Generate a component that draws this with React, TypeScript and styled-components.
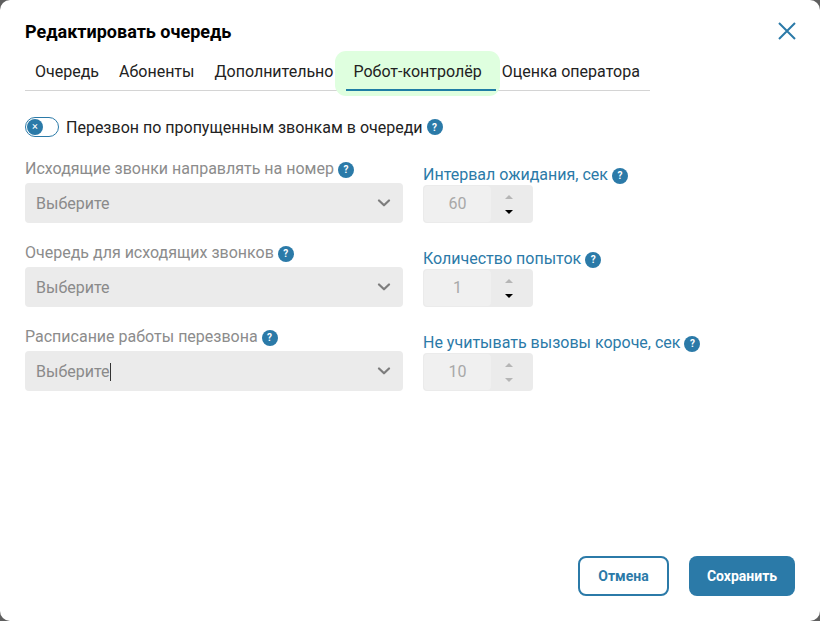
import React from 'react';
import styled, { createGlobalStyle } from 'styled-components';

const Global = createGlobalStyle`
  html, body {
    margin: 0;
    padding: 0;
    height: 100%;
    background: #5f5f5f;
    font-family: Roboto, "Liberation Sans", sans-serif;
  }
  * { box-sizing: border-box; }
`;

const Help = () => (
  <HelpIcon>?</HelpIcon>
);

const Chevron = () => (
  <svg width="14" height="8" viewBox="0 0 14 8" fill="none">
    <path d="M2 1.5L7 6.3l5-4.8" stroke="#7d7d7d" strokeWidth="2.2" strokeLinecap="round" strokeLinejoin="round" />
  </svg>
);

const fields = [
  { select: 'Исходящие звонки направлять на номер', spin: 'Интервал ожидания, сек', value: '60', down: true },
  { select: 'Очередь для исходящих звонков', spin: 'Количество попыток', value: '1', down: true },
  { select: 'Расписание работы перезвона', spin: 'Не учитывать вызовы короче, сек', value: '10', down: false, caret: true },
];

export default function App() {
  return (
    <Modal>
      <Global />
      <Header>
        <Title>Редактировать очередь</Title>
        <Close>
          <svg width="20" height="20" viewBox="0 0 20 20" fill="none">
            <path d="M2 2l16 16M18 2L2 18" stroke="#2b7aa8" strokeWidth="2" />
          </svg>
        </Close>
      </Header>
      <Tabs>
        <Tab>Очередь</Tab>
        <Tab>Абоненты</Tab>
        <Tab>Дополнительно</Tab>
        <Tab $active>Робот-контролёр</Tab>
        <Tab>Оценка оператора</Tab>
      </Tabs>
      <ToggleRow>
        <Toggle>
          <Knob>×</Knob>
        </Toggle>
        <ToggleLabel>Перезвон по пропущенным звонкам в очереди</ToggleLabel>
        <Help />
      </ToggleRow>
      <Form>
        {fields.map((f) => (
          <Row key={f.select}>
            <SelectField>
              <SelectLabel>
                {f.select} <Help />
              </SelectLabel>
              <Select>
                <span>
                  Выберите
                  {f.caret && <Caret />}
                </span>
                <Chevron />
              </Select>
            </SelectField>
            <SpinField>
              <SpinLabel>
                {f.spin} <Help />
              </SpinLabel>
              <Spin>
                <SpinValue>{f.value}</SpinValue>
                <SpinButtons>
                  <ArrowUp />
                  <ArrowDown $dark={f.down} />
                </SpinButtons>
              </Spin>
            </SpinField>
          </Row>
        ))}
      </Form>
      <Footer>
        <CancelButton>Отмена</CancelButton>
        <SaveButton>Сохранить</SaveButton>
      </Footer>
    </Modal>
  );
}

const Modal = styled.div`
  width: 820px;
  height: 621px;
  background: #fff;
  border-radius: 10px;
  padding: 0 25px;
  display: flex;
  flex-direction: column;
  overflow: hidden;
`;

const Header = styled.div`
  display: flex;
  justify-content: space-between;
  align-items: center;
  height: 62px;
`;

const Title = styled.h2`
  margin: 0;
  font-size: 18px;
  font-weight: 700;
  color: #000;
`;

const Close = styled.div`
  display: flex;
  margin-right: -2px;
`;

const Tabs = styled.div`
  display: flex;
  width: 625px;
  height: 29px;
  border-bottom: 1px solid #d4d4d4;
  isolation: isolate;
`;

const Tab = styled.div<{ $active?: boolean }>`
  position: relative;
  padding: 0 10px;
  height: 29px;
  font-size: 16px;
  line-height: 20px;
  color: #222;
  white-space: nowrap;

  ${(p) =>
    p.$active &&
    `
    &::before {
      content: '';
      position: absolute;
      z-index: -1;
      left: -8px;
      right: -8px;
      top: -11px;
      height: 45px;
      background: #dfffdf;
      border-radius: 11px;
    }
    &::after {
      content: '';
      position: absolute;
      left: 3px;
      right: -4px;
      top: 27px;
      height: 2px;
      background: #1f7ea5;
    }
  `}
`;

const ToggleRow = styled.div`
  display: flex;
  align-items: center;
  gap: 7px;
  margin-top: 26px;
  height: 20px;
`;

const Toggle = styled.div`
  width: 34px;
  height: 20px;
  border: 1px solid #2b7aa8;
  border-radius: 10px;
  padding: 1px;
  display: flex;
  align-items: center;
`;

const Knob = styled.div`
  width: 16px;
  height: 16px;
  border-radius: 50%;
  background: #2b7aa8;
  color: #fff;
  font-size: 11px;
  line-height: 16px;
  text-align: center;
`;

const ToggleLabel = styled.span`
  font-size: 16px;
  color: #222;
  margin-right: -3px;
`;

const HelpIcon = styled.span`
  display: inline-flex;
  align-items: center;
  justify-content: center;
  flex: none;
  width: 16px;
  height: 16px;
  border-radius: 50%;
  background: #2b7aa8;
  color: #fff;
  font-size: 10px;
  font-weight: 700;
  vertical-align: 1px;
`;

const Form = styled.div`
  display: flex;
  flex-direction: column;
  gap: 30px;
  margin-top: 32px;
`;

const Row = styled.div`
  display: flex;
  gap: 20px;
  align-items: flex-end;
  height: 54px;
`;

const SelectField = styled.div`
  width: 378px;
`;

const SelectLabel = styled.div`
  font-size: 16px;
  line-height: 18px;
  color: #8c8c8c;
  margin-bottom: 5px;
  white-space: nowrap;
`;

const Select = styled.div`
  display: flex;
  justify-content: space-between;
  align-items: center;
  height: 40px;
  padding: 0 12px 0 11px;
  background: #ebebeb;
  border-radius: 4px;
  font-size: 16px;
  color: #8a8a8a;
`;

const Caret = styled.span`
  display: inline-block;
  width: 1px;
  height: 18px;
  background: #333;
  vertical-align: -4px;
`;

const SpinField = styled.div`
  width: 110px;
`;

const SpinLabel = styled.div`
  font-size: 16px;
  line-height: 18px;
  color: #2b7aa8;
  margin-bottom: 1px;
  white-space: nowrap;
`;

const Spin = styled.div`
  display: flex;
  height: 38px;
  background: #ebebeb;
  border-radius: 4px;
`;

const SpinValue = styled.div`
  width: 67px;
  margin: 1px 0 0 1px;
  height: 36px;
  background: #f0f0f0;
  border-radius: 4px;
  color: #a8a8a8;
  font-size: 16px;
  line-height: 36px;
  text-align: center;
`;

const SpinButtons = styled.div`
  flex: 1;
  display: flex;
  flex-direction: column;
  align-items: center;
  justify-content: center;
  gap: 11px;
  padding-right: 6px;
`;

const ArrowUp = styled.div`
  width: 0;
  height: 0;
  border-left: 4px solid transparent;
  border-right: 4px solid transparent;
  border-bottom: 4px solid #b5b5b5;
`;

const ArrowDown = styled.div<{ $dark?: boolean }>`
  width: 0;
  height: 0;
  border-left: 4px solid transparent;
  border-right: 4px solid transparent;
  border-top: 4px solid ${(p) => (p.$dark ? '#000' : '#b5b5b5')};
`;

const Footer = styled.div`
  display: flex;
  justify-content: flex-end;
  gap: 20px;
  margin-top: auto;
  margin-bottom: 25px;
`;

const CancelButton = styled.button`
  width: 91px;
  height: 40px;
  background: #fff;
  border: 2px solid #2b7aa8;
  border-radius: 8px;
  color: #2b7aa8;
  font-family: inherit;
  font-size: 14px;
  font-weight: 700;
`;

const SaveButton = styled.button`
  width: 106px;
  height: 40px;
  background: #2b7aa8;
  border: 0;
  border-radius: 8px;
  color: #fff;
  font-family: inherit;
  font-size: 14px;
  font-weight: 700;
`;
